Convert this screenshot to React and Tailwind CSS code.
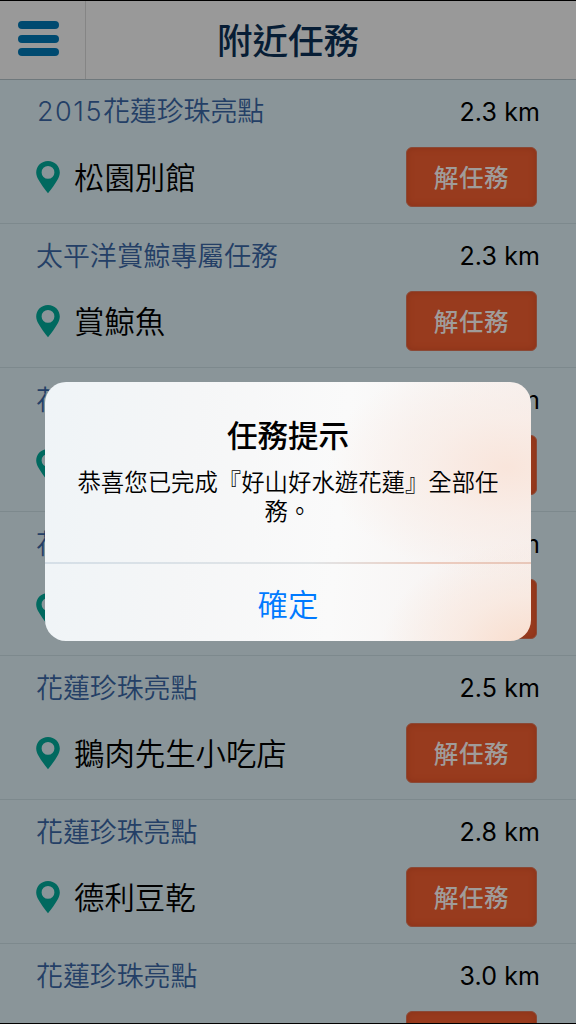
const tasks = [
  { year: '2015', group: '花蓮珍珠亮點', place: '松園別館', distance: '2.3 km' },
  { group: '太平洋賞鯨專屬任務', place: '賞鯨魚', distance: '2.3 km' },
  { group: '花蓮珍珠亮點', place: '', distance: '2.4 km' },
  { group: '花蓮珍珠亮點', place: '', distance: '2.4 km' },
  { group: '花蓮珍珠亮點', place: '鵝肉先生小吃店', distance: '2.5 km' },
  { group: '花蓮珍珠亮點', place: '德利豆乾', distance: '2.8 km' },
  { group: '花蓮珍珠亮點', place: '', distance: '3.0 km' },
];

function Pin() {
  return (
    <svg width="24" height="33" viewBox="0 0 24 33" className="shrink-0">
      <path
        fill="#00695f"
        fillRule="evenodd"
        d="M12 0C5.400 0 .2 5.100.2 11.500c0 2.300.9 4.700 2 6.700C4.800 22.900 8.600 28 12 32.200c3.400-4.200 7.200-9.300 9.800-14 1.100-2 2-4.400 2-6.700C23.800 5.100 18.600 0 12 0ZM12 5a6.400 6.400 0 1 1 0 12.800A6.400 6.400 0 0 1 12 5Z"
      />
    </svg>
  );
}

function TaskRow({ year, group, place, distance, hasButtonLabel }) {
  return (
    <li className="h-36 shrink-0 border-b border-[#7d898d] px-9 pt-[11px]">
      <div className="flex h-10 items-center justify-between">
        <span className="text-[26.9px] font-[350] leading-10 text-[#243f66]">
          {year && (
            <span className="ml-px font-['Inter',sans-serif] text-[27px] font-[350] tracking-[1.5px]">{year}</span>
          )}
          {group}
        </span>
        <span className="pt-0.5 font-['Inter',sans-serif] text-[25px] leading-10 tracking-[0.1px] text-black">
          {distance}
        </span>
      </div>
      <div className="mt-4 flex h-[60px] items-center">
        <Pin />
        <span className="ml-3.5 flex-1 pb-0.5 text-[30.4px] font-[350] leading-[58px] text-black">{place}</span>
        <button className="mr-[3px] h-[60px] w-[131px] rounded-md border border-[#8b4936] bg-[#983b1e] text-[24.5px] font-medium tracking-[0.6px] text-[#a09c9a] shadow-[inset_0_0_6px_#8a3218]">
          {hasButtonLabel && '解任務'}
        </button>
      </div>
    </li>
  );
}

export default function App() {
  return (
    <div className="relative flex h-[1024px] w-[576px] flex-col overflow-hidden border-y border-black bg-[#8a9599] font-['Noto_Sans_CJK_TC',sans-serif]">
      <header className="flex h-[79px] shrink-0 border-b border-[#6f787c] bg-[#999]">
        <button className="flex w-[86px] flex-col gap-[5.5px] border-r border-[#858585] pl-[18px] pt-5" aria-label="選單">
          <span className="h-2 w-[41px] rounded-full bg-[#004a70]" />
          <span className="h-2 w-[41px] rounded-full bg-[#004a70]" />
          <span className="h-2 w-[41px] rounded-full bg-[#004a70]" />
        </button>
        <h1 className="flex-1 pr-[86px] text-center text-[35.5px] font-medium leading-[75px] text-[#071d35]">附近任務</h1>
      </header>
      <ul className="flex flex-col">
        {tasks.map((t, i) => (
          <TaskRow key={i} {...t} hasButtonLabel={t.place !== ''} />
        ))}
      </ul>
      <div className="absolute left-[45px] top-[381px] flex h-[259px] w-[486px] flex-col overflow-hidden rounded-[21px] bg-[radial-gradient(ellipse_150px_110px_at_100%_104%,#f9dccb_0%,#f9e6dbb0_50%,#f9e8de00_100%),radial-gradient(ellipse_180px_110px_at_95%_33%,#f9e5db_0%,#f9ebe4b0_45%,#f9eee900_100%),linear-gradient(95deg,#eff4f7_0%,#f5f6f7_30%,#fafafa_60%,#f6f0ee_100%)] text-center">
        <h2 className="mt-[30px] text-[30.5px] font-medium leading-[44px] text-black">任務提示</h2>
        <p className="mt-[11px] whitespace-pre-line text-[23.4px] font-[350] leading-[29px] text-black">
          {'恭喜您已完成『好山好水遊花蓮』全部任\n務。'}
        </p>
        <div className="mt-auto h-[2px] shrink-0 bg-[linear-gradient(90deg,#d5dfe7_0%,#e2e5e7_55%,#ecccbf_80%,#e8c7b9_100%)]" />
        <button className="h-[77px] shrink-0 text-[30.4px] font-[350] leading-[76px] text-[#007aff]">確定</button>
      </div>
    </div>
  );
}
